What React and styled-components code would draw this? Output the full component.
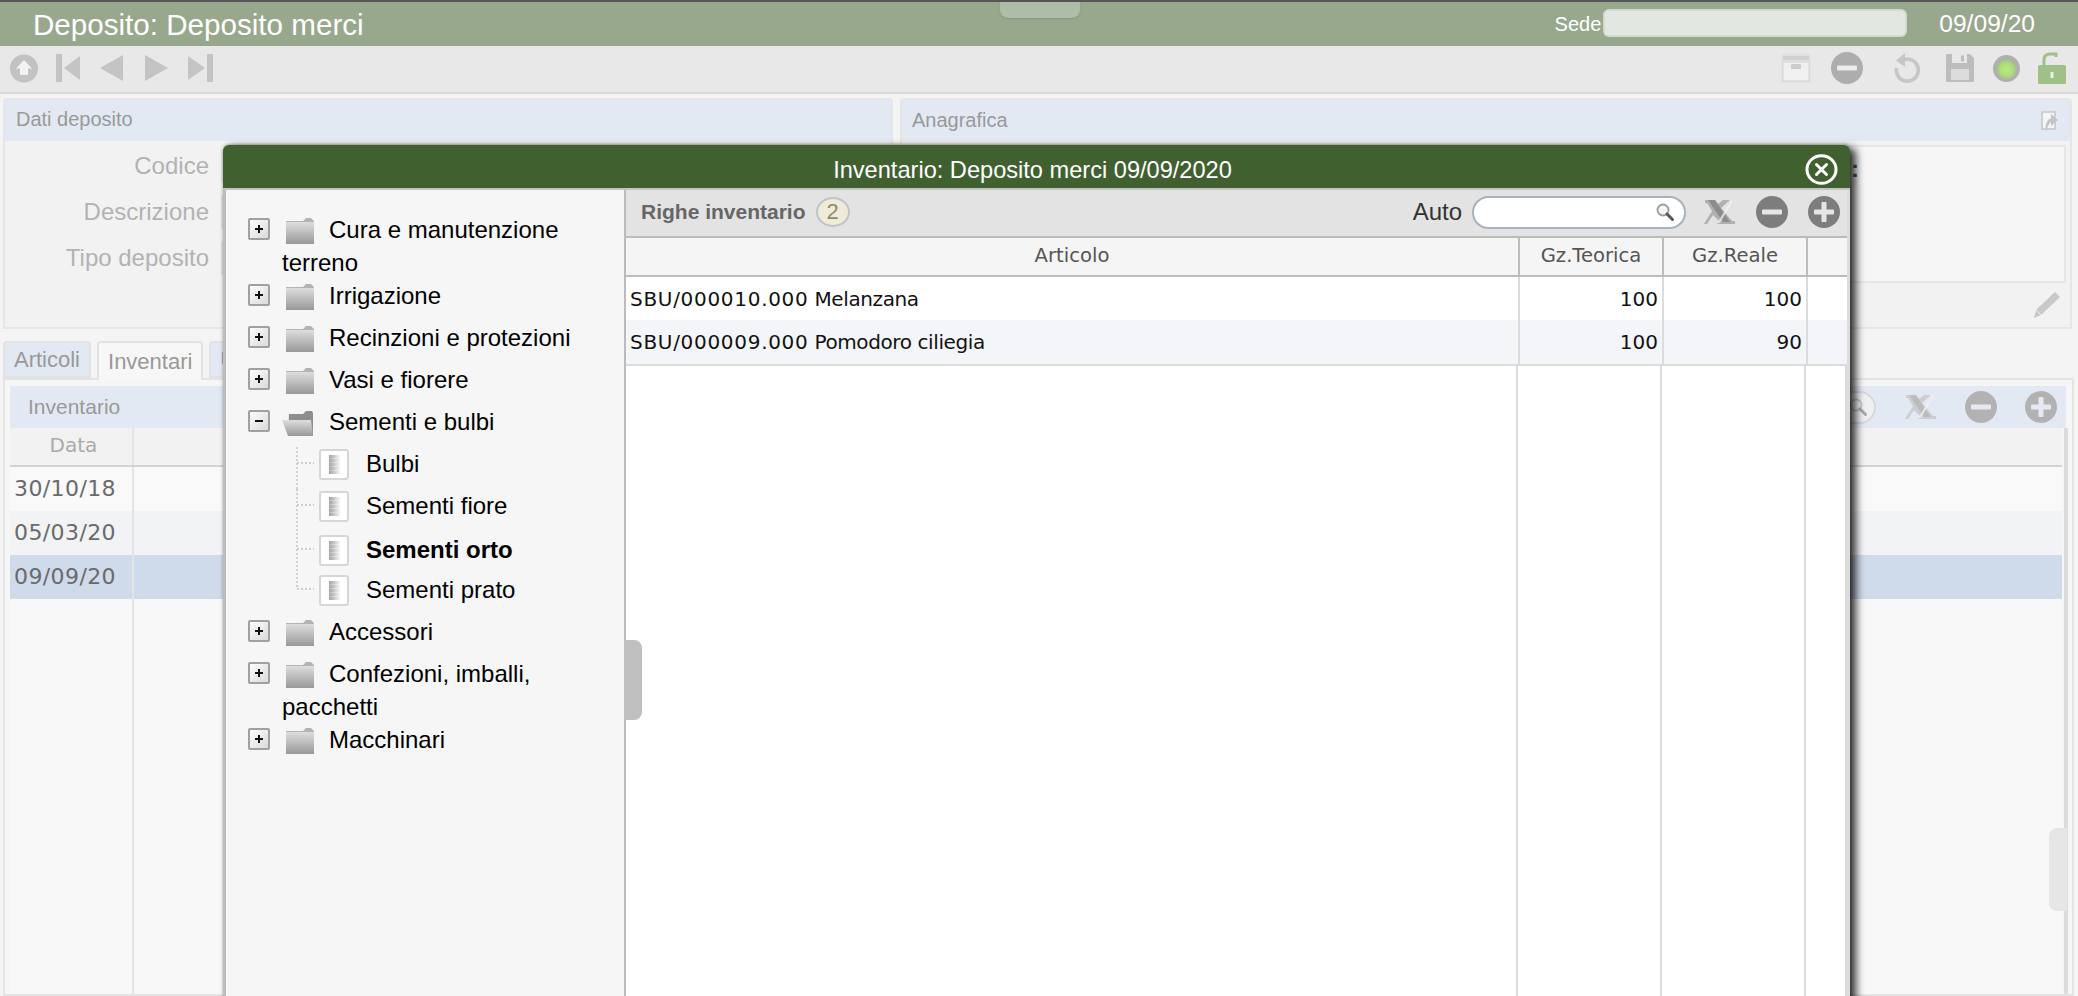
import React from 'react';
import styled, { createGlobalStyle } from 'styled-components';

const GlobalStyle = createGlobalStyle`
  html, body {
    margin: 0;
    padding: 0;
    height: 100%;
    overflow: hidden;
    background: #f4f4f4;
    font-family: "Liberation Sans", Arial, sans-serif;
  }
  * { box-sizing: border-box; }
`;

const Page = styled.div`
  position: relative;
  height: 996px;
  overflow: hidden;
  display: flex;
  flex-direction: column;
`;

/* top bar */
const TopBar = styled.div`
  position: relative;
  height: 46px;
  flex: none;
  border-top: 2px solid #555558;
  background: #98a88d;
  color: #fff;
  display: flex;
  align-items: center;
  padding: 0 43px 0 33px;
`;
const Title = styled.div`
  font-size: 29.6px;
  flex: 1;
  margin-top: 1px;
`;
const SedeLabel = styled.span`
  font-size: 20px;
  margin-right: 2px;
`;
const SedeInput = styled.div`
  width: 304px;
  height: 28px;
  margin-top: -3px;
  background: #e2e8e1;
  border: 2px solid #d3dbd1;
  border-radius: 6px;
`;
const DateText = styled.span`
  font-size: 24.6px;
  margin-left: 32px;
`;
const TopHandle = styled.div`
  position: absolute;
  left: 1000px;
  top: 0;
  width: 80px;
  height: 16px;
  background: #aebca8;
  border-radius: 0 0 8px 8px;
  box-shadow: 0 1px 2px rgba(0, 0, 0, 0.12);
`;

/* main toolbar */
const MainToolbar = styled.div`
  height: 48px;
  flex: none;
  background: #e8e8e8;
  border-bottom: 2px solid #d9d9d9;
  display: flex;
  align-items: center;
  padding: 0 12px 2px 10px;
`;
const IconGroup = styled.div`
  display: flex;
  align-items: center;
  gap: ${(p) => p.$gap || 0}px;
  margin-left: ${(p) => (p.$push ? 'auto' : '0')};
  svg { display: block; flex: none; }
`;
const Spacer = styled.span`
  width: ${(p) => p.$w}px;
`;

/* upper panels */
const PanelRow = styled.div`
  display: grid;
  grid-template-columns: 890px 1172px;
  gap: 7px;
  margin: 4px 0 0 3px;
  flex: none;
`;
const Panel = styled.section`
  height: 231px;
  background: #f2f2f2;
  border: 2px solid #e6e6e6;
  border-radius: 4px 4px 0 0;
  display: flex;
  flex-direction: column;
`;
const PanelHead = styled.div`
  height: 41px;
  flex: none;
  background: #e3e9f3;
  color: #999;
  font-size: 20px;
  padding: 0 12px ${(p) => (p.$left ? 0 : 2)}px ${(p) => p.$left || 11}px;
  display: flex;
  align-items: center;
  justify-content: space-between;
`;
const FormGrid = styled.div`
  display: grid;
  grid-template-columns: 204px 1fr;
  column-gap: 12px;
  row-gap: 10px;
  padding: 7px 0 0 0;
  align-items: center;
`;
const FormLabel = styled.label`
  text-align: right;
  color: #b2b2b2;
  font-size: 24px;
`;
const FormField = styled.div`
  height: 36px;
  background: #f8f8f8;
  border: 2px solid #e2e2e2;
  border-radius: 4px;
`;
const NotesBox = styled.div`
  height: 138px;
  margin: 4px 4px 0 4px;
  background: #f6f6f6;
  border: 2px solid #e6e6e6;
  padding: 8px 0 0 943px;
  color: #555;
  font-size: 24px;
  font-weight: bold;
`;
const PanelFoot = styled.div`
  flex: 1;
  display: flex;
  justify-content: flex-end;
  align-items: center;
  padding-right: 10px;
`;

/* tabs */
const TabBar = styled.div`
  display: flex;
  gap: 6px;
  margin: 12px 0 0 3px;
  height: 37px;
  flex: none;
`;
const Tab = styled.div`
  height: ${(p) => (p.$active ? 39 : 37)}px;
  padding: 0 9px;
  background: ${(p) => (p.$active ? '#f7f7f7' : '#e3e9f3')};
  border: 2px solid #e2e2e2;
  border-bottom: ${(p) => (p.$active ? 'none' : '2px solid #e2e2e2')};
  border-radius: 4px 4px 0 0;
  color: #999;
  font-size: 22px;
  display: flex;
  align-items: center;
  position: relative;
  z-index: 1;
`;
const InvPanel = styled.section`
  flex: 1;
  margin: 0 4px 0 3px;
  border: 2px solid #e4e4e4;
  padding: 6px 6px 0 5px;
  background: #f6f6f6;
  display: flex;
  flex-direction: column;
  position: relative;
`;
const InvHead = styled.div`
  height: 42px;
  flex: none;
  background: #e3e9f3;
  display: flex;
  align-items: center;
  padding: 0 9px 0 18px;
  color: #999;
  font-size: 21px;
`;
const GhostSearch = styled.div`
  width: 212px;
  height: 33px;
  margin-right: 29px;
  border: 2px solid #d8d8d8;
  border-radius: 17px;
  margin-left: auto;
  background: #eef0f4;
  display: flex;
  align-items: center;
  justify-content: flex-end;
  padding-right: 6px;
  svg { opacity: 0.45; }
`;
const InvGrid = styled.div`
  flex: 1;
  display: flex;
  flex-direction: column;
  border-right: 4px solid #dcdcdc;
  margin-right: -2px;
  padding-right: 2px;
`;
const InvRow = styled.div`
  display: grid;
  grid-template-columns: 124px 1fr;
  flex: ${(p) => (p.$fill ? 1 : 'none')};
  height: ${(p) => (p.$fill ? 'auto' : p.$head ? '39px' : '44px')};
  background: ${(p) => p.$bg || '#f8f8f8'};
  border-bottom: ${(p) => (p.$head ? '2px solid #d4d4d4' : 'none')};
`;
const InvCell = styled.div`
  border-right: ${(p) => (p.$sep ? '2px solid #e4e4e4' : 'none')};
  padding: ${(p) => (p.$head ? '0 0 4px 5px' : '0 0 1px 4px')};
  display: flex;
  align-items: center;
  justify-content: ${(p) => (p.$head ? 'center' : 'flex-start')};
  color: ${(p) => (p.$head ? '#aaa' : '#6a6a6a')};
  font-family: "DejaVu Sans", Verdana, sans-serif;
  font-size: ${(p) => (p.$head ? 20 : 22)}px;
  letter-spacing: ${(p) => (p.$head ? 0 : 0.4)}px;
`;
const ScrollThumb = styled.div`
  position: absolute;
  right: 5px;
  top: 448px;
  width: 18px;
  height: 83px;
  background: #e6e6e6;
  border-radius: 8px 0 0 8px;
`;

/* dialog */
const Modal = styled.div`
  position: absolute;
  z-index: 10;
  left: 223px;
  top: 145px;
  width: 1627px;
  height: 860px;
  display: flex;
  flex-direction: column;
  background: #f6f6f6;
  border-left: 3px solid #bdbdbd;
  border-right: 3px solid #dcdcdc;
  border-radius: 6px 6px 0 0;
  box-shadow: 6px 3px 9px rgba(0, 0, 0, 0.8), 0 -1px 3px rgba(0, 0, 0, 0.25);
`;
const ModalTitle = styled.div`
  position: relative;
  height: 45px;
  flex: none;
  margin: 0 -3px;
  padding: 7px 8px 0 0;
  background: #40602f;
  border-bottom: 2px solid #c4c4c4;
  border-radius: 6px 6px 0 0;
  color: #fff;
  font-size: 23.6px;
  display: flex;
  align-items: center;
  justify-content: center;
`;
const CloseButton = styled.button`
  position: absolute;
  right: 12px;
  top: 9px;
  width: 33px;
  height: 31px;
  padding: 0;
  background: none;
  border: none;
  svg { display: block; }
`;
const ModalBody = styled.div`
  flex: 1;
  display: flex;
  min-height: 0;
`;
const TreePane = styled.div`
  position: relative;
  width: 400px;
  flex: none;
  background: #f6f6f6;
  border-right: 2px solid #bbb;
  padding: 23px 2px 0 22px;
  color: #000;
  font-size: 24px;
`;
const SplitHandle = styled.div`
  position: absolute;
  left: 398px;
  top: 450px;
  width: 18px;
  height: 80px;
  background: #c0c0c0;
  border-radius: 0 8px 8px 0;
`;
const Node = styled.div`
  padding-left: 34px;
  line-height: 33px;
  min-height: 42px;
`;
const ExpandBox = styled.span`
  display: inline-flex;
  vertical-align: middle;
  margin: -5px 0 0 -34px;
`;
const NodeFolder = styled.span`
  display: inline-flex;
  vertical-align: middle;
  margin: -1px 15px 0 ${(p) => (p.$open ? 12 : 16)}px;
`;
const Leaf = styled.div`
  display: flex;
  align-items: flex-start;
  height: 42px;
  padding: ${(p) => (p.$selected ? 2 : 0)}px 0 0 48px;
  font-weight: ${(p) => (p.$selected ? 'bold' : 'normal')};
  line-height: 33px;
`;
const LeafIcon = styled.span`
  display: flex;
  margin: 2px 17px 0 0;
`;
const LeafConnector = styled.svg`
  flex: none;
  display: block;
`;

const GridPane = styled.div`
  flex: 1;
  min-width: 0;
  display: flex;
  flex-direction: column;
`;
const GridToolbar = styled.div`
  height: 48px;
  flex: none;
  background: #e3e3e3;
  border-bottom: 2px solid #bcbcbc;
  display: flex;
  align-items: center;
  padding: 0 7px 2px 15px;
`;
const GridTitle = styled.span`
  color: #666;
  font-size: 21px;
  font-weight: bold;
`;
const CountBadge = styled.span`
  width: 34px;
  height: 30px;
  margin-left: 10px;
  border: 2px solid #bcc3ca;
  border-radius: 50%;
  background: #f0ebd6;
  color: #8c8a6e;
  font-size: 22px;
  display: flex;
  align-items: center;
  justify-content: center;
`;
const AutoLabel = styled.span`
  margin-left: auto;
  margin-right: 10px;
  color: #333;
  font-size: 24px;
`;
const SearchBox = styled.div`
  width: 214px;
  height: 33px;
  margin-right: 18px;
  background: #fff;
  border: 2px solid #a9b1bb;
  border-radius: 17px;
  display: flex;
  align-items: center;
  justify-content: flex-end;
  padding-right: 9px;
  svg { display: block; }
`;
const GridRow = styled.div`
  display: grid;
  grid-template-columns: 894px 144px 144px 1fr;
  flex: none;
  height: ${(p) => p.$h}px;
  background: ${(p) => p.$bg};
  border-bottom: ${(p) => (p.$line ? `2px solid ${p.$line}` : 'none')};
`;
const GridHeadCell = styled.div`
  border-right: ${(p) => (p.$last ? 'none' : '2px solid #bcbcbc')};
  color: #555;
  font-family: "DejaVu Sans", Verdana, sans-serif;
  font-size: 19.6px;
  padding-bottom: 2px;
  display: flex;
  align-items: center;
  justify-content: center;
`;
const GridCell = styled.div`
  border-right: ${(p) => (p.$last ? 'none' : '2px solid #dcdcdc')};
  color: #111;
  font-family: "DejaVu Sans", Verdana, sans-serif;
  font-size: 20px;
  padding: 0 4px 0 4px;
  display: flex;
  align-items: center;
  justify-content: ${(p) => (p.$num ? 'flex-end' : 'flex-start')};
`;
const ItemCode = styled.span`
  letter-spacing: 0.7px;
`;
const ItemName = styled.span`
  margin-left: 6px;
  letter-spacing: -0.4px;
`;
const EmptyGrid = styled.div`
  flex: 1;
  display: grid;
  grid-template-columns: 892px 144px 144px 41px;
  background: #fff;
`;
const EmptyCol = styled.div`
  border-right: 2px solid #dcdcdc;
`;

/* drawings */
const Nav = ({ d, c = '#c4c4c4', w = 24, h = 28 }) => (
  <svg width={w} height={h} viewBox={`0 0 ${w} ${h}`}>
    <path d={d} fill={c} />
  </svg>
);
const UpCircle = () => (
  <svg width="28" height="29" viewBox="0 0 28 29">
    <circle cx="14" cy="14.5" r="14" fill="#c2c2c2" />
    <path d="M14 6 L22 14.5 H18 V21 H10 V14.5 H6 Z" fill="#f2f2f2" />
  </svg>
);
const RoundSign = ({ plus, c = '#7d7d7d', s = 32, bar = '#e6e6e6' }) => (
  <svg width={s} height={s} viewBox="0 0 32 32">
    <circle cx="16" cy="16" r="16" fill={c} />
    <rect x="6" y="13.5" width="20" height="5" rx="1" fill={bar} />
    {plus && <rect x="13.5" y="6" width="5" height="20" rx="1" fill={bar} />}
  </svg>
);
const ExcelX = ({ c = '#8d8d8d' }) => (
  <svg width="32" height="26" viewBox="0 0 32 26">
    <path d="M1 1 H11 L14 5 L19 1 H26 L17 9 L28 22 H31 V25 H13 L15 22 L9 16 L3 25 H0 L8 12 L3 4 H1 Z" fill={c} opacity="0.6" />
    <path d="M4 1 H11 L26 23 H19 Z" fill={c} />
    <path d="M13 24 L27 2 H29 L16 24 Z" fill="#f2f2f2" opacity="0.7" />
  </svg>
);
const Lens = () => (
  <svg width="20" height="20" viewBox="0 0 20 20">
    <circle cx="8" cy="8" r="5.5" fill="#f4f4f4" stroke="#9a9a9a" strokeWidth="1.8" />
    <path d="M12 12 L17.5 17.5" stroke="#555" strokeWidth="3" strokeLinecap="round" />
  </svg>
);
const CloseIcon = () => (
  <svg width="33" height="31" viewBox="0 0 33 31">
    <ellipse cx="16.5" cy="15.5" rx="14.5" ry="13.8" fill="none" stroke="#fff" strokeWidth="3" />
    <path d="M11.5 10.5 L21.5 20.5 M21.5 10.5 L11.5 20.5" stroke="#fff" strokeWidth="3" strokeLinecap="round" />
  </svg>
);
const ArchiveIcon = () => (
  <svg width="30" height="30" viewBox="0 0 30 30">
    <rect x="0.5" y="0.5" width="29" height="29" fill="#e0e0e0" />
    <rect x="2" y="3" width="26" height="4" fill="#d0d0d0" />
    <rect x="2" y="9" width="26" height="19" fill="#f0f0f0" stroke="#d4d4d4" />
    <rect x="10" y="11" width="10" height="5" rx="1" fill="#cdcdcd" />
  </svg>
);
const RefreshIcon = () => (
  <svg width="30" height="32" viewBox="0 0 30 32">
    <path d="M10 8.5 A11 11 0 1 1 4.5 16" fill="none" stroke="#c6c6c6" strokeWidth="3.6" />
    <path d="M13 1 L4 8.5 L13 15 Z" fill="#c6c6c6" />
  </svg>
);
const SaveIcon = () => (
  <svg width="28" height="28" viewBox="0 0 28 28">
    <path d="M0 0 H24 L28 4 V28 H0 Z" fill="#bdbdbd" />
    <rect x="6" y="0" width="15" height="9" fill="#e8e8e8" />
    <rect x="15" y="1.5" width="3" height="6" fill="#bdbdbd" />
    <rect x="5" y="15" width="18" height="11" fill="#dcdcdc" />
  </svg>
);
const StatusLight = () => (
  <svg width="27" height="27" viewBox="0 0 27 27">
    <defs>
      <radialGradient id="lightFill" cx="0.5" cy="0.55" r="0.5">
        <stop offset="0" stopColor="#b8e880" />
        <stop offset="0.6" stopColor="#aede78" />
        <stop offset="1" stopColor="#a6b69a" />
      </radialGradient>
    </defs>
    <circle cx="13.5" cy="13.5" r="13.5" fill="#b0b0b0" />
    <circle cx="13.5" cy="13.5" r="10.5" fill="url(#lightFill)" />
  </svg>
);
const OpenLock = () => (
  <svg width="28" height="32" viewBox="0 0 28 32">
    <path d="M6 14 V8 Q6 2 12 2 H18 V5" fill="none" stroke="#a0c088" strokeWidth="3" />
    <rect x="0" y="13" width="28" height="19" rx="1.5" fill="#a0c088" />
    <rect x="12.5" y="20" width="3" height="6" fill="#e8f0e0" />
  </svg>
);
const ShareIcon = () => (
  <svg width="18" height="24" viewBox="0 0 18 24">
    <path d="M2 3 H15 V20 H2 Z" fill="#f2f4f8" stroke="#c6c6c6" strokeWidth="1.6" />
    <path d="M6 23 Q4 12 11 9 V5 L18 11 L11 17 V13 Q8 15 6 23 Z" fill="#c4c4c4" />
  </svg>
);
const PencilIcon = () => (
  <svg width="26" height="26" viewBox="0 0 26 26">
    <path d="M21 0 L26 5 L7 23 L0 26 L2 18 Z" fill="#c8c8c8" />
    <path d="M2 18 L7 23" stroke="#f0f0f0" strokeWidth="1" />
  </svg>
);
const ExpandIcon = ({ open }) => (
  <svg width="22" height="22" viewBox="0 0 22 22">
    <defs>
      <linearGradient id="boxFill" x1="0" y1="0" x2="1" y2="1">
        <stop offset="0" stopColor="#fff" />
        <stop offset="1" stopColor="#d8d8d8" />
      </linearGradient>
    </defs>
    <rect x="1" y="1" width="20" height="20" rx="1" fill="url(#boxFill)" stroke="#a0a0a0" strokeWidth="2" />
    <rect x="7" y="10" width="8" height="2" fill="#111" />
    {!open && <rect x="10" y="7" width="2" height="8" fill="#111" />}
  </svg>
);
const FolderIcon = ({ open }) => (
  <svg width={open ? 32 : 28} height="26" viewBox={open ? '0 0 32 26' : '0 0 28 26'}>
    <defs>
      <linearGradient id="folderFill" x1="0" y1="0" x2="0" y2="1">
        <stop offset="0" stopColor="#dedede" />
        <stop offset="1" stopColor="#989898" />
      </linearGradient>
    </defs>
    {open ? (
      <g>
        <path d="M7 4 H21 L24 1 H30 L31 3 V26 H6 Z" fill="#8e8e8e" />
        <path d="M0 10 H29 L31 26 H6 Z" fill="url(#folderFill)" />
      </g>
    ) : (
      <g>
        <path d="M0 3 H17 L20 0 H25 L28 3 V6 H0 Z" fill="#b4b4b4" />
        <rect x="0" y="4" width="28" height="22" fill="url(#folderFill)" />
      </g>
    )}
  </svg>
);
const DocIcon = () => (
  <svg width="30" height="31" viewBox="0 0 30 31">
    <defs>
      <linearGradient id="docFill" x1="0" y1="0" x2="1" y2="0">
        <stop offset="0" stopColor="#a0a0a0" />
        <stop offset="1" stopColor="#fff" />
      </linearGradient>
    </defs>
    <rect x="1" y="1" width="28" height="29" rx="2" fill="#fff" stroke="#d6d6d6" strokeWidth="2" />
    <rect x="10" y="6" width="12" height="19" fill="url(#docFill)" />
    {[9, 13, 17, 21].map((y) => (
      <rect key={y} x="10" y={y} width="12" height="1" fill="#fff" opacity="0.3" />
    ))}
  </svg>
);
const LeafLine = ({ last }) => (
  <LeafConnector width="23" height="42" viewBox="0 0 23 42">
    <path
      d={`M1 0 V${last ? 16 : 42} M1 16 H18`}
      fill="none"
      stroke="#cfcfcf"
      strokeWidth="2"
      strokeDasharray="2 2"
    />
  </LeafConnector>
);

const tree = [
  { label: 'Cura e manutenzione terreno' },
  { label: 'Irrigazione' },
  { label: 'Recinzioni e protezioni' },
  { label: 'Vasi e fiorere' },
  {
    label: 'Sementi e bulbi',
    open: true,
    items: ['Bulbi', 'Sementi fiore', 'Sementi orto', 'Sementi prato'],
  },
  { label: 'Accessori' },
  { label: 'Confezioni, imballi, pacchetti' },
  { label: 'Macchinari' },
];

const rows = [
  { code: 'SBU/000010.000', name: 'Melanzana', teo: 100, real: 100, bg: '#fff', h: 43 },
  { code: 'SBU/000009.000', name: 'Pomodoro ciliegia', teo: 100, real: 90, bg: '#f4f5f8', h: 46, line: '#dcdcdc' },
];

const inventories = [
  { d: '30/10/18', bg: '#f9f9f9' },
  { d: '05/03/20', bg: '#f2f3f5' },
  { d: '09/09/20', bg: '#cfdbeb' },
];

function App() {
  return (
    <Page>
      <GlobalStyle />
      <TopBar>
        <Title>Deposito: Deposito merci</Title>
        <SedeLabel>Sede</SedeLabel>
        <SedeInput />
        <DateText>09/09/20</DateText>
        <TopHandle />
      </TopBar>

      <MainToolbar>
        <IconGroup>
          <UpCircle />
          <Spacer $w={18} />
          <Nav w={24} d="M0 0 H6 V28 H0 Z M24 2 V26 L8 14 Z" />
          <Spacer $w={20} />
          <Nav w={23} d="M23 1 V27 L0 14 Z" />
          <Spacer $w={22} />
          <Nav w={23} d="M0 1 V27 L23 14 Z" />
          <Spacer $w={20} />
          <Nav w={25} d="M19 0 H25 V28 H19 Z M0 2 V26 L17 14 Z" />
        </IconGroup>
        <IconGroup $push>
          <ArchiveIcon />
          <Spacer $w={20} />
          <RoundSign c="#adadad" bar="#ececec" />
          <Spacer $w={29} />
          <RefreshIcon />
          <Spacer $w={24} />
          <SaveIcon />
          <Spacer $w={19} />
          <StatusLight />
          <Spacer $w={18} />
          <OpenLock />
        </IconGroup>
      </MainToolbar>

      <PanelRow>
        <Panel>
          <PanelHead>Dati deposito</PanelHead>
          <FormGrid>
            <FormLabel>Codice</FormLabel>
            <FormField />
            <FormLabel>Descrizione</FormLabel>
            <FormField />
            <FormLabel>Tipo deposito</FormLabel>
            <FormField />
          </FormGrid>
        </Panel>
        <Panel>
          <PanelHead $left={10}>
            Anagrafica
            <ShareIcon />
          </PanelHead>
          <NotesBox>:</NotesBox>
          <PanelFoot>
            <PencilIcon />
          </PanelFoot>
        </Panel>
      </PanelRow>

      <TabBar>
        <Tab>Articoli</Tab>
        <Tab $active>Inventari</Tab>
        <Tab>Ubicazioni</Tab>
      </TabBar>
      <InvPanel>
        <InvHead>
          Inventario
          <GhostSearch>
            <Lens />
          </GhostSearch>
          <IconGroup $gap={28}>
            <ExcelX c="#bcbcbc" />
            <RoundSign c="#b2b2b2" bar="#e6e9f0" />
            <RoundSign plus c="#b2b2b2" bar="#e6e9f0" />
          </IconGroup>
        </InvHead>
        <InvGrid>
          <InvRow $head $bg="#f2f2f2">
            <InvCell $head $sep>Data</InvCell>
            <InvCell />
          </InvRow>
          {inventories.map((inv) => (
            <InvRow key={inv.d} $bg={inv.bg}>
              <InvCell $sep>{inv.d}</InvCell>
              <InvCell />
            </InvRow>
          ))}
          <InvRow $fill>
            <InvCell $sep />
            <InvCell />
          </InvRow>
        </InvGrid>
        <ScrollThumb />
      </InvPanel>

      <Modal>
        <ModalTitle>
          Inventario: Deposito merci 09/09/2020
          <CloseButton>
            <CloseIcon />
          </CloseButton>
        </ModalTitle>
        <ModalBody>
          <TreePane>
            {tree.map((node) => (
              <React.Fragment key={node.label}>
                <Node>
                  <ExpandBox>
                    <ExpandIcon open={node.open} />
                  </ExpandBox>
                  <NodeFolder $open={node.open}>
                    <FolderIcon open={node.open} />
                  </NodeFolder>
                  {node.label}
                </Node>
                {node.items &&
                  node.items.map((item, i) => (
                    <Leaf key={item} $selected={item === 'Sementi orto'}>
                      <LeafLine last={i === node.items.length - 1} />
                      <LeafIcon>
                        <DocIcon />
                      </LeafIcon>
                      {item}
                    </Leaf>
                  ))}
              </React.Fragment>
            ))}
            <SplitHandle />
          </TreePane>
          <GridPane>
            <GridToolbar>
              <GridTitle>Righe inventario</GridTitle>
              <CountBadge>2</CountBadge>
              <AutoLabel>Auto</AutoLabel>
              <SearchBox>
                <Lens />
              </SearchBox>
              <IconGroup $gap={20}>
                <ExcelX />
                <RoundSign />
                <RoundSign plus />
              </IconGroup>
            </GridToolbar>
            <GridRow $h={39} $bg="#f5f5f5" $line="#bcbcbc">
              <GridHeadCell>Articolo</GridHeadCell>
              <GridHeadCell>Gz.Teorica</GridHeadCell>
              <GridHeadCell>Gz.Reale</GridHeadCell>
              <GridHeadCell $last />
            </GridRow>
            {rows.map((r) => (
              <GridRow key={r.code} $h={r.h} $bg={r.bg} $line={r.line}>
                <GridCell>
                  <ItemCode>{r.code}</ItemCode>
                  <ItemName>{r.name}</ItemName>
                </GridCell>
                <GridCell $num>{r.teo}</GridCell>
                <GridCell $num>{r.real}</GridCell>
                <GridCell $last />
              </GridRow>
            ))}
            <EmptyGrid>
              <EmptyCol />
              <EmptyCol />
              <EmptyCol />
              <EmptyCol />
            </EmptyGrid>
          </GridPane>
        </ModalBody>
      </Modal>
    </Page>
  );
}

export default App;
